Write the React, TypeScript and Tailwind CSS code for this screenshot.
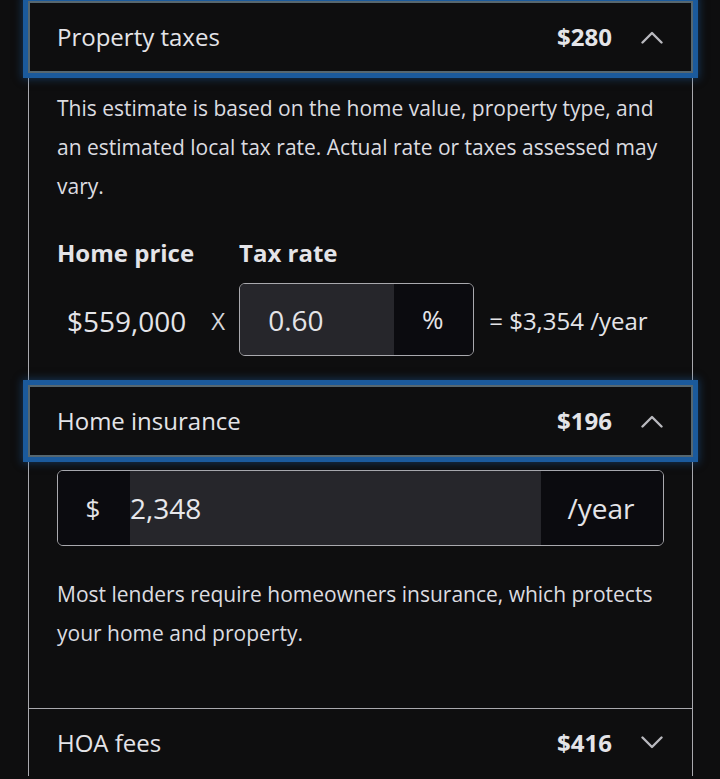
import React from "react";

function Chevron({ up }: { up: boolean }) {
  return (
    <svg width="22" height="13" viewBox="0 0 22 13" fill="none" className="shrink-0">
      <polyline
        points={up ? "1.5,11.5 11,2 20.5,11.5" : "1.5,1.5 11,11 20.5,1.5"}
        stroke="#b9b9be"
        strokeWidth="2.4"
        strokeLinecap="round"
        strokeLinejoin="round"
      />
    </svg>
  );
}

function Header({
  title,
  amount,
  open,
  focused,
}: {
  title: string;
  amount: string;
  open: boolean;
  focused?: boolean;
}) {
  return (
    <button
      type="button"
      className={
        focused
          ? "relative z-10 flex h-[72px] w-full items-center justify-between border-2 border-[#566770] bg-[#0e0e0f] pl-[27px] pr-[28px] text-left shadow-[0_0_0_5px_#1b5a9c,0_0_8px_6px_rgba(27,90,156,0.5)]"
          : "flex h-[68px] w-full items-center justify-between border-t border-[#a9a9ae] bg-[#0e0e0f] pl-[28px] pr-[29px] text-left"
      }
    >
      <span className="text-[24px] text-[#e4e4e8]">{title}</span>
      <span className="flex items-center gap-[29px]">
        <span className="text-[24px] font-bold text-[#e4e4e8]">{amount}</span>
        <Chevron up={open} />
      </span>
    </button>
  );
}

export default function App() {
  return (
    <main
      className="min-h-screen bg-[#0e0e0f] px-[28px] pt-[1px] text-[#e4e4e8]"
      style={{ fontFamily: '"Open Sans", "Noto Sans", sans-serif' }}
    >
      <div className="w-[665px]">
        <Header title="Property taxes" amount="$280" open focused />
        <section className="border-x border-[#a9a9ae] px-[28px] pb-[29px] pt-[16px]">
          <p className="text-[21px] leading-[39px] text-[#dcdce0]">
            This estimate is based on the home value, property type, and an
            estimated local tax rate. Actual rate or taxes assessed may vary.
          </p>
          <div className="mt-[32px] flex">
            <span className="w-[182px] text-[24px] font-bold leading-[30px]">Home price</span>
            <span className="text-[24px] font-bold leading-[30px]">Tax rate</span>
          </div>
          <div className="mt-[15px] flex items-center">
            <span className="pl-[10px] pt-[3px] text-[28px]">$559,000</span>
            <span className="ml-[25px] pt-[3px] text-[24px] text-[#d6d6da]">X</span>
            <div className="ml-[14px] flex h-[73px] w-[235px] overflow-hidden rounded-[6px] border border-[#a9a9ae]">
              <div className="flex flex-1 items-center bg-[#26262b] pl-[28px] text-[28px]">0.60</div>
              <div className="flex w-[79px] items-center justify-center bg-[#0b0b0f] pr-[2px] text-[26px]">%</div>
            </div>
            <span className="ml-[15px] pt-[3px] text-[24px]">= $3,354 /year</span>
          </div>
        </section>
        <Header title="Home insurance" amount="$196" open focused />
        <section className="border-x border-[#a9a9ae] px-[28px] pb-[55px] pt-[13px]">
          <div className="flex h-[76px] overflow-hidden rounded-[6px] border border-[#a9a9ae] text-[28px]">
            <div className="flex w-[72px] items-center justify-center bg-[#0b0b0f] pr-[2px] text-[26px]">$</div>
            <div className="flex flex-1 items-center bg-[#26262b] text-[#e8e8ec]">2,348</div>
            <div className="flex w-[122px] items-center justify-center bg-[#0b0b0f] pr-[2px]">/year</div>
          </div>
          <p className="mt-[29px] text-[21px] leading-[39px] text-[#dcdce0]">
            Most lenders require homeowners insurance, which protects your home
            and property.
          </p>
        </section>
        <div className="border-x border-[#a9a9ae]">
          <Header title="HOA fees" amount="$416" open={false} />
        </div>
      </div>
    </main>
  );
}
